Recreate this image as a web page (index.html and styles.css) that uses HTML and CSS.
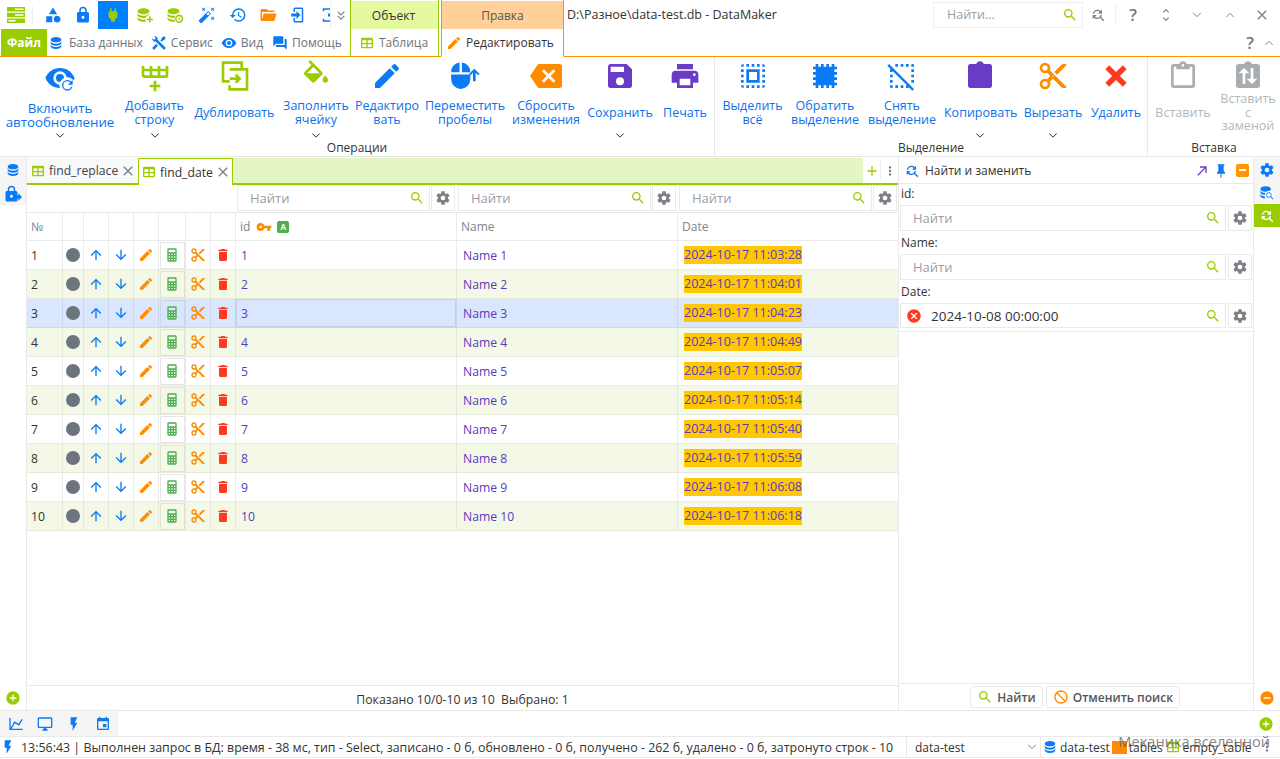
FILE: index.html
```html
<!DOCTYPE html>
<html lang="ru">
<head>
    <meta charset="UTF-8">
    <title>DataMaker</title>
    <link rel="stylesheet" href="styles.css">
</head>
<body>
<svg class="defs" xmlns="http://www.w3.org/2000/svg">
    <symbol id="eye" viewBox="0 0 24 24"><path d="M12,9A3,3 0 0,0 9,12A3,3 0 0,0 12,15A3,3 0 0,0 15,12A3,3 0 0,0 12,9M12,17A5,5 0 0,1 7,12A5,5 0 0,1 12,7A5,5 0 0,1 17,12A5,5 0 0,1 12,17M12,4.5C7,4.5 2.73,7.61 1,12C2.73,16.39 7,19.5 12,19.5C17,19.5 21.27,16.39 23,12C21.27,7.61 17,4.5 12,4.5Z"/></symbol>
    <symbol id="eyesync" viewBox="0 0 24 24"><path d="M12,9A3,3 0 0,0 9,12A3,3 0 0,0 12,15A3,3 0 0,0 15,12A3,3 0 0,0 12,9M12,17A5,5 0 0,1 7,12A5,5 0 0,1 12,7A5,5 0 0,1 17,12A5,5 0 0,1 12,17M12,4.5C7,4.5 2.73,7.61 1,12C2.73,16.39 7,19.5 12,19.5C17,19.5 21.27,16.39 23,12C21.27,7.61 17,4.5 12,4.5Z"/><circle cx="17.5" cy="17.5" r="6" fill="#fff"/><path transform="translate(11.5 11.5) scale(.5)" d="M17.65,6.35C16.2,4.9 14.21,4 12,4A8,8 0 0,0 4,12A8,8 0 0,0 12,20C15.73,20 18.84,17.45 19.73,14H17.65C16.83,16.33 14.61,18 12,18A6,6 0 0,1 6,12A6,6 0 0,1 12,6C13.66,6 15.14,6.69 16.22,7.78L13,11H20V4L17.65,6.35Z"/></symbol>
    <symbol id="pencil" viewBox="0 0 24 24"><path d="M20.71,7.04C21.1,6.65 21.1,6 20.71,5.63L18.37,3.29C18,2.9 17.35,2.9 16.96,3.29L15.12,5.12L18.87,8.87M3,17.25V21H6.75L17.81,9.93L14.06,6.18L3,17.25Z"/></symbol>
    <symbol id="save" viewBox="0 0 24 24"><path d="M15,9H5V5H15M12,19A3,3 0 0,1 9,16A3,3 0 0,1 12,13A3,3 0 0,1 15,16A3,3 0 0,1 12,19M17,3H5C3.89,3 3,3.9 3,5V19A2,2 0 0,0 5,21H19A2,2 0 0,0 21,19V7L17,3Z"/></symbol>
    <symbol id="printer" viewBox="0 0 24 24"><path d="M18,3H6V7H18M19,12A1,1 0 0,1 18,11A1,1 0 0,1 19,10A1,1 0 0,1 20,11A1,1 0 0,1 19,12M16,19H8V14H16M19,8H5A3,3 0 0,0 2,11V17H6V21H18V17H22V11A3,3 0 0,0 19,8Z"/></symbol>
    <symbol id="search" viewBox="0 0 24 24"><path d="M9.5,3A6.5,6.5 0 0,1 16,9.5C16,11.11 15.41,12.59 14.44,13.73L14.71,14H15.5L20.5,19L19,20.5L14,15.5V14.71L13.73,14.44C12.59,15.41 11.11,16 9.5,16A6.5,6.5 0 0,1 3,9.5A6.5,6.5 0 0,1 9.5,3M9.5,5C7,5 5,7 5,9.5C5,12 7,14 9.5,14C12,14 14,12 14,9.5C14,7 12,5 9.5,5Z"/></symbol>
    <symbol id="cog" viewBox="0 0 24 24"><path d="M12,15.5A3.5,3.5 0 0,1 8.5,12A3.5,3.5 0 0,1 12,8.5A3.5,3.5 0 0,1 15.5,12A3.5,3.5 0 0,1 12,15.5M19.43,12.97C19.47,12.65 19.5,12.33 19.5,12C19.5,11.67 19.47,11.34 19.43,11L21.54,9.37C21.73,9.22 21.78,8.95 21.66,8.73L19.66,5.27C19.54,5.05 19.27,4.96 19.05,5.05L16.56,6.05C16.04,5.66 15.5,5.32 14.87,5.07L14.5,2.42C14.46,2.18 14.25,2 14,2H10C9.75,2 9.54,2.18 9.5,2.42L9.13,5.07C8.5,5.32 7.96,5.66 7.44,6.05L4.95,5.05C4.73,4.96 4.46,5.05 4.34,5.27L2.34,8.73C2.21,8.95 2.27,9.22 2.46,9.37L4.57,11C4.53,11.34 4.5,11.67 4.5,12C4.5,12.33 4.53,12.65 4.57,12.97L2.46,14.63C2.27,14.78 2.21,15.05 2.34,15.27L4.34,18.73C4.46,18.95 4.73,19.03 4.95,18.95L7.44,17.94C7.96,18.34 8.5,18.68 9.13,18.93L9.5,21.58C9.54,21.82 9.75,22 10,22H14C14.25,22 14.46,21.82 14.5,21.58L14.87,18.93C15.5,18.67 16.04,18.34 16.56,17.94L19.05,18.95C19.27,19.03 19.54,18.95 19.66,18.73L21.66,15.27C21.78,15.05 21.73,14.78 21.54,14.63L19.43,12.97Z"/></symbol>
    <symbol id="cut" viewBox="0 0 24 24"><path d="M19,3L13,9L15,11L22,4V3M12,12.5A0.5,0.5 0 0,1 11.5,12A0.5,0.5 0 0,1 12,11.5A0.5,0.5 0 0,1 12.5,12A0.5,0.5 0 0,1 12,12.5M6,20A2,2 0 0,1 4,18C4,16.89 4.9,16 6,16A2,2 0 0,1 8,18C8,19.11 7.1,20 6,20M6,8A2,2 0 0,1 4,6C4,4.89 4.9,4 6,4A2,2 0 0,1 8,6C8,7.11 7.1,8 6,8M9.64,7.64C9.87,7.14 10,6.59 10,6A4,4 0 0,0 6,2A4,4 0 0,0 2,6A4,4 0 0,0 6,10C6.59,10 7.14,9.87 7.64,9.64L10,12L7.64,14.36C7.14,14.13 6.59,14 6,14A4,4 0 0,0 2,18A4,4 0 0,0 6,22A4,4 0 0,0 10,18C10,17.41 9.87,16.86 9.64,16.36L12,14L19,21H22V20L9.64,7.64Z"/></symbol>
    <symbol id="trash" viewBox="0 0 24 24"><path d="M19,4H15.5L14.5,3H9.5L8.5,4H5V6H19M6,19A2,2 0 0,0 8,21H16A2,2 0 0,0 18,19V7H6V19Z"/></symbol>
    <symbol id="close" viewBox="0 0 24 24"><path d="M20 6.91L17.09 4L12 9.09L6.91 4L4 6.91L9.09 12L4 17.09L6.91 20L12 14.91L17.09 20L20 17.09L14.91 12L20 6.91Z"/></symbol>
    <symbol id="up" viewBox="0 0 24 24"><path d="M13,20H11V8L5.5,13.5L4.08,12.08L12,4.16L19.92,12.08L18.5,13.5L13,8V20Z"/></symbol>
    <symbol id="down" viewBox="0 0 24 24"><path d="M11,4H13V16L18.5,10.5L19.92,11.92L12,19.84L4.08,11.92L5.5,10.5L11,16V4Z"/></symbol>
    <symbol id="calc" viewBox="0 0 24 24"><path d="M7,2H17A2,2 0 0,1 19,4V20A2,2 0 0,1 17,22H7A2,2 0 0,1 5,20V4A2,2 0 0,1 7,2M7,4V8H17V4H7M7,10V12H9V10H7M11,10V12H13V10H11M15,10V12H17V10H15M7,14V16H9V14H7M11,14V16H13V14H11M15,14V16H17V14H15M7,18V20H9V18H7M11,18V20H13V18H11M15,18V20H17V18H15Z"/></symbol>
    <symbol id="db" viewBox="0 0 24 24"><path d="M12,3C7.58,3 4,4.79 4,7C4,9.21 7.58,11 12,11C16.42,11 20,9.21 20,7C20,4.79 16.42,3 12,3M4,9V12C4,14.21 7.58,16 12,16C16.42,16 20,14.21 20,12V9C20,11.21 16.42,13 12,13C7.58,13 4,11.21 4,9M4,14V17C4,19.21 7.58,21 12,21C16.42,21 20,19.21 20,17V14C20,16.21 16.42,18 12,18C7.58,18 4,16.21 4,14Z"/></symbol>
    <symbol id="dbplus" viewBox="0 0 24 24"><path transform="translate(-2 0)" d="M12,3C7.58,3 4,4.79 4,7C4,9.21 7.58,11 12,11C16.42,11 20,9.21 20,7C20,4.79 16.42,3 12,3M4,9V12C4,14.21 7.58,16 12,16C16.42,16 20,14.21 20,12V9C20,11.21 16.42,13 12,13C7.58,13 4,11.21 4,9M4,14V17C4,19.21 7.58,21 12,21C16.42,21 20,19.21 20,17V14C20,16.21 16.42,18 12,18C7.58,18 4,16.21 4,14Z"/><circle cx="18.5" cy="18" r="6" fill="#fff"/><path d="M17.5 14h2v3h3v2h-3v3h-2v-3h-3v-2h3z"/></symbol>
    <symbol id="dbclock" viewBox="0 0 24 24"><path transform="translate(-2 0)" d="M12,3C7.58,3 4,4.79 4,7C4,9.21 7.58,11 12,11C16.42,11 20,9.21 20,7C20,4.79 16.42,3 12,3M4,9V12C4,14.21 7.58,16 12,16C16.42,16 20,14.21 20,12V9C20,11.21 16.42,13 12,13C7.58,13 4,11.21 4,9M4,14V17C4,19.21 7.58,21 12,21C16.42,21 20,19.21 20,17V14C20,16.21 16.42,18 12,18C7.58,18 4,16.21 4,14Z"/><circle cx="17.5" cy="17" r="6.5" fill="#fff"/><path d="M17.5 11.5a5.5 5.5 0 1 0 0 11a5.5 5.5 0 0 0 0-11zm0 2a3.5 3.5 0 1 1 0 7a3.5 3.5 0 0 1 0-7zm-.7 1v3l2.4 1.4.6-1-1.7-1v-2.4z"/></symbol>
    <symbol id="dbsearch" viewBox="0 0 24 24"><path transform="translate(-2 -1)" d="M12,3C7.58,3 4,4.79 4,7C4,9.21 7.58,11 12,11C16.42,11 20,9.21 20,7C20,4.79 16.42,3 12,3M4,9V12C4,14.21 7.58,16 12,16C16.42,16 20,14.21 20,12V9C20,11.21 16.42,13 12,13C7.58,13 4,11.21 4,9M4,14V17C4,19.21 7.58,21 12,21C16.42,21 20,19.21 20,17V14C20,16.21 16.42,18 12,18C7.58,18 4,16.21 4,14Z"/><circle cx="16" cy="16" r="7.5" fill="#fff"/><path transform="translate(9 9) scale(.62)" d="M9.5,3A6.5,6.5 0 0,1 16,9.5C16,11.11 15.41,12.59 14.44,13.73L14.71,14H15.5L20.5,19L19,20.5L14,15.5V14.71L13.73,14.44C12.59,15.41 11.11,16 9.5,16A6.5,6.5 0 0,1 3,9.5A6.5,6.5 0 0,1 9.5,3M9.5,5C7,5 5,7 5,9.5C5,12 7,14 9.5,14C12,14 14,12 14,9.5C14,7 12,5 9.5,5Z"/></symbol>
    <symbol id="table" viewBox="0 0 24 24"><path d="M5,4H19A2,2 0 0,1 21,6V18A2,2 0 0,1 19,20H5A2,2 0 0,1 3,18V6A2,2 0 0,1 5,4M5,8V12H11V8H5M13,8V12H19V8H13M5,14V18H11V14H5M13,14V18H19V14H13Z"/></symbol>
    <symbol id="lock" viewBox="0 0 24 24"><path d="M12,17A2,2 0 0,0 14,15C14,13.89 13.1,13 12,13A2,2 0 0,0 10,15A2,2 0 0,0 12,17M18,8A2,2 0 0,1 20,10V20A2,2 0 0,1 18,22H6A2,2 0 0,1 4,20V10C4,8.89 4.9,8 6,8H7V6A5,5 0 0,1 12,1A5,5 0 0,1 17,6V8H18M12,3A3,3 0 0,0 9,6V8H15V6A3,3 0 0,0 12,3Z"/></symbol>
    <symbol id="locksync" viewBox="0 0 24 24"><path transform="translate(-2 0)" d="M12,17A2,2 0 0,0 14,15C14,13.89 13.1,13 12,13A2,2 0 0,0 10,15A2,2 0 0,0 12,17M18,8A2,2 0 0,1 20,10V20A2,2 0 0,1 18,22H6A2,2 0 0,1 4,20V10C4,8.89 4.9,8 6,8H7V6A5,5 0 0,1 12,1A5,5 0 0,1 17,6V8H18M12,3A3,3 0 0,0 9,6V8H15V6A3,3 0 0,0 12,3Z"/><path d="M16 14h3v-3l5 5-5 5v-3h-3z"/></symbol>
    <symbol id="plug" viewBox="0 0 24 24"><path d="M16,7V3H14V7H10V3H8V7H8C7,7 6,8 6,9V14.5L9.5,18V21H14.5V18L18,14.5V9C18,8 17,7 16,7Z"/></symbol>
    <symbol id="shape" viewBox="0 0 24 24"><path d="M11,13.5V21.5H3V13.5H11M12,2L17.5,11H6.5L12,2M17.5,13C20,13 22,15 22,17.5C22,20 20,22 17.5,22C15,22 13,20 13,17.5C13,15 15,13 17.5,13Z"/></symbol>
    <symbol id="folder" viewBox="0 0 24 24"><path d="M19,20H4C2.89,20 2,19.1 2,18V6C2,4.89 2.89,4 4,4H10L12,6H19A2,2 0 0,1 21,8H21L4,8V18L6.14,10H23.21L20.93,18.5C20.7,19.37 19.92,20 19,20Z"/></symbol>
    <symbol id="tools" viewBox="0 0 24 24"><path d="M21.71 20.29L20.29 21.71A1 1 0 0 1 18.88 21.71L7 9.85A3.81 3.81 0 0 1 6 10A4 4 0 0 1 2.22 4.7L4.76 7.24L5.29 6.71L6.71 5.29L7.24 4.76L4.7 2.22A4 4 0 0 1 10 6A3.81 3.81 0 0 1 9.85 7L21.71 18.88A1 1 0 0 1 21.71 20.29M2.29 18.88A1 1 0 0 0 2.29 20.29L3.71 21.71A1 1 0 0 0 5.12 21.71L10.59 16.25L7.76 13.42M20 2L16 4V6L13.83 8.17L15.83 10.17L18 8H20L22 4Z"/></symbol>
    <symbol id="forum" viewBox="0 0 24 24"><path d="M17,12V3A1,1 0 0,0 16,2H3A1,1 0 0,0 2,3V17L6,13H16A1,1 0 0,0 17,12M21,6H19V15H6V17A1,1 0 0,0 7,18H18L22,22V7A1,1 0 0,0 21,6Z"/></symbol>
    <symbol id="pin" viewBox="0 0 24 24"><path d="M16,12V4H17V2H7V4H8V12L6,14V16H11.2V22H12.8V16H18V14L16,12Z"/></symbol>
    <symbol id="diag" viewBox="0 0 24 24"><path d="M5,17.59L15.59,7H9V5H19V15H17V8.41L6.41,19L5,17.59Z"/></symbol>
    <symbol id="key" viewBox="0 0 24 24"><path d="M7,14A2,2 0 0,1 5,12A2,2 0 0,1 7,10A2,2 0 0,1 9,12A2,2 0 0,1 7,14M12.65,10C11.83,7.67 9.61,6 7,6A6,6 0 0,0 1,12A6,6 0 0,0 7,18C9.61,18 11.83,16.33 12.65,14H17V18H21V14H23V10H12.65Z"/></symbol>
    <symbol id="clip" viewBox="0 0 24 24"><path d="M19,3H14.82C14.4,1.84 13.3,1 12,1C10.7,1 9.6,1.84 9.18,3H5A2,2 0 0,0 3,5V19A2,2 0 0,0 5,21H19A2,2 0 0,0 21,19V5A2,2 0 0,0 19,3Z"/></symbol>
    <symbol id="clipout" viewBox="0 0 24 24"><path d="M19,3H14.82C14.4,1.84 13.3,1 12,1C10.7,1 9.6,1.84 9.18,3H5A2,2 0 0,0 3,5V19A2,2 0 0,0 5,21H19A2,2 0 0,0 21,19V5A2,2 0 0,0 19,3M12,3A1,1 0 0,1 13,4A1,1 0 0,1 12,5A1,1 0 0,1 11,4A1,1 0 0,1 12,3M7,7H17V5H19V19H5V5H7V7Z"/></symbol>
    <symbol id="clipswap" viewBox="0 0 24 24"><path d="M19,3H14.82C14.4,1.84 13.3,1 12,1C10.7,1 9.6,1.84 9.18,3H5A2,2 0 0,0 3,5V19A2,2 0 0,0 5,21H19A2,2 0 0,0 21,19V5A2,2 0 0,0 19,3Z"/><path fill="#fff" d="M9 6l4 4h-3v8H8v-8H5zM15 18l-4-4h3V6h2v8h3z"/></symbol>
    <symbol id="backspace" viewBox="0 0 24 24"><path d="M22,3H7C6.31,3 5.77,3.35 5.41,3.88L0,12L5.41,20.11C5.77,20.64 6.31,21 7,21H22A2,2 0 0,0 24,19V5A2,2 0 0,0 22,3M19,15.59L17.59,17L14,13.41L10.41,17L9,15.59L12.59,12L9,8.41L10.41,7L14,10.59L17.59,7L19,8.41L15.41,12L19,15.59Z"/></symbol>
    <symbol id="selall" viewBox="0 0 24 24"><path d="M9,9H15V15H9M7,17H17V7H7M15,5H17V3H15M15,21H17V19H15M19,17H21V15H19M19,9H21V7H19M19,21A2,2 0 0,0 21,19H19M19,13H21V11H19M11,21H13V19H11M9,3H7V5H9M3,17H5V15H3M5,21V19H3A2,2 0 0,0 5,21M19,3V5H21A2,2 0 0,0 19,3M13,3H11V5H13M3,9H5V7H3M7,21H9V19H7M3,13H5V11H3M3,5H5V3A2,2 0 0,0 3,5Z"/></symbol>
    <symbol id="selinv" viewBox="0 0 24 24"><path d="M5,3H7V5H9V3H11V5H13V3H15V5H17V3H19V5H21V7H19V9H21V11H19V13H21V15H19V17H21V19H19V21H17V19H15V21H13V19H11V21H9V19H7V21H5V19H3V17H5V15H3V13H5V11H3V9H5V7H3V5H5V3Z"/></symbol>
    <symbol id="seloff" viewBox="0 0 24 24"><path d="M1,4.27L2.28,3L21,21.72L19.73,23L17,20.27V21H15V19H15.73L5,8.27V9H3V7H3.73L1,4.27M20,3A1,1 0 0,1 21,4V5H19V3H20M15,5V3H17V5H15M11,5V3H13V5H11M7,5V3H9V5H7M11,21V19H13V21H11M7,21V19H9V21H7M4,21A1,1 0 0,1 3,20V19H5V21H4M3,15H5V17H3V15M21,15V17H19V15H21M3,11H5V13H3V11M21,11V13H19V11H21M21,7V9H19V7H21Z"/></symbol>
    <symbol id="fill" viewBox="0 0 24 24"><path d="M19,11.5C19,11.5 17,13.67 17,15A2,2 0 0,0 19,17A2,2 0 0,0 21,15C21,13.67 19,11.5 19,11.5M5.21,10L10,5.21L14.79,10M16.56,8.94L7.62,0L6.21,1.41L8.59,3.79L3.44,8.94C2.85,9.5 2.85,10.47 3.44,11.06L8.94,16.56C9.23,16.85 9.62,17 10,17C10.38,17 10.77,16.85 11.06,16.56L16.56,11.06C17.15,10.47 17.15,9.5 16.56,8.94Z"/></symbol>
    <symbol id="addrow" viewBox="0 0 24 24"><path d="M22,10A2,2 0 0,1 20,12H4A2,2 0 0,1 2,10V3H4V5H8V3H10V5H14V3H16V5H20V3H22V10M4,10H8V7H4V10M10,10H14V7H10V10M20,10V7H16V10H20M11,14H13V17H16V19H13V22H11V19H8V17H11V14Z"/></symbol>
    <symbol id="dup" viewBox="0 0 24 24"><path fill="none" stroke="currentColor" stroke-width="2" d="M8 16H3V2h14v5M8 7h13v15H8v-3M8 14h7M12.5 11l3 3-3 3"/></symbol>
    <symbol id="mouseup" viewBox="0 0 24 24"><path transform="translate(-2 1) scale(.9)" d="M11,1.07C7.05,1.56 4,4.92 4,9H11M4,15A8,8 0 0,0 12,23A8,8 0 0,0 20,15V11H4M13,1.07V9H20C20,4.92 16.94,1.56 13,1.07Z"/><path d="M20 16h-2V9.5l-2 2-1-1 4-4 4 4-1 1-2-2z"/></symbol>
    <symbol id="wand" viewBox="0 0 24 24"><path d="M7.5,5.6L5,7L6.4,4.5L5,2L7.5,3.4L10,2L8.6,4.5L10,7L7.5,5.6M19.5,15.4L22,14L20.6,16.5L22,19L19.5,17.6L17,19L18.4,16.5L17,14L19.5,15.4M22,2L20.6,4.5L22,7L19.5,5.6L17,7L18.4,4.5L17,2L19.5,3.4L22,2M13.34,12.78L15.78,10.34L13.66,8.22L11.22,10.66L13.34,12.78M14.37,7.29L16.71,9.63C17.1,10 17.1,10.65 16.71,11.04L5.04,22.71C4.65,23.1 4,23.1 3.63,22.71L1.29,20.37C0.9,20 0.9,19.35 1.29,18.96L12.96,7.29C13.35,6.9 14,6.9 14.37,7.29Z"/></symbol>
    <symbol id="history" viewBox="0 0 24 24"><path d="M13.5,8H12V13L16.28,15.54L17,14.33L13.5,12.25V8M13,3A9,9 0 0,0 4,12H1L4.96,16.03L9,12H6A7,7 0 0,1 13,5A7,7 0 0,1 20,12A7,7 0 0,1 13,19C11.07,19 9.32,18.21 8.06,16.94L6.64,18.36C8.27,20 10.5,21 13,21A9,9 0 0,0 22,12A9,9 0 0,0 13,3"/></symbol>
    <symbol id="login" viewBox="0 0 24 24"><path d="M10,17.25V14H3V10H10V6.75L15.25,12L10,17.25M8,2H17A2,2 0 0,1 19,4V20A2,2 0 0,1 17,22H8A2,2 0 0,1 6,20V16H8V20H17V4H8V8H6V4A2,2 0 0,1 8,2Z"/></symbol>
    <symbol id="boxdot" viewBox="0 0 24 24"><path d="M5 3h16v18H5v-4h2v2h12V5H7v2H5zM12 10h4v4h-4z"/></symbol>
    <symbol id="chart" viewBox="0 0 24 24"><path d="M16,11.78L20.24,4.45L21.97,5.45L16.74,14.5L10.23,10.75L5.46,19H22V21H2V3H4V17.54L9.5,8L16,11.78Z"/></symbol>
    <symbol id="monitor" viewBox="0 0 24 24"><path d="M21,16H3V4H21M21,2H3C1.89,2 1,2.89 1,4V16A2,2 0 0,0 3,18H10V20H8V22H16V20H14V18H21A2,2 0 0,0 23,16V4C23,2.89 22.1,2 21,2Z"/></symbol>
    <symbol id="flash" viewBox="0 0 24 24"><path d="M7,2V13H10V22L17,10H13L17,2H7Z"/></symbol>
    <symbol id="calendar" viewBox="0 0 24 24"><path d="M19,19H5V8H19M16,1V3H8V1H6V3H5C3.89,3 3,3.89 3,5V19A2,2 0 0,0 5,21H19A2,2 0 0,0 21,19V5C21,3.89 20.1,3 19,3H18V1M17,12H12V17H17V12Z"/></symbol>
    <symbol id="findrep" viewBox="0 0 24 24"><path d="M11,6C12.38,6 13.63,6.56 14.54,7.46L12,10H18V4L15.95,6.05C14.68,4.78 12.93,4 11,4C7.47,4 4.57,6.61 4.08,10H6.1C6.56,7.72 8.58,6 11,6M16.64,15.14C17.3,14.24 17.76,13.17 17.92,12H15.9C15.44,14.28 13.42,16 11,16C9.62,16 8.37,15.44 7.46,14.54L10,12H4V18L6.05,15.95C7.32,17.22 9.07,18 11,18C12.55,18 14,17.5 15.14,16.64L20,21.5L21.5,20L16.64,15.14Z"/></symbol>
    <symbol id="pluscirc" viewBox="0 0 24 24"><path d="M17,13H13V17H11V13H7V11H11V7H13V11H17M12,2A10,10 0 0,0 2,12A10,10 0 0,0 12,22A10,10 0 0,0 22,12A10,10 0 0,0 12,2Z"/></symbol>
    <symbol id="minuscirc" viewBox="0 0 24 24"><path d="M17,13H7V11H17M12,2A10,10 0 0,0 2,12A10,10 0 0,0 12,22A10,10 0 0,0 22,12A10,10 0 0,0 12,2Z"/></symbol>
    <symbol id="closecirc" viewBox="0 0 24 24"><path d="M12,2C17.53,2 22,6.47 22,12C22,17.53 17.53,22 12,22C6.47,22 2,17.53 2,12C2,6.47 6.47,2 12,2M15.59,7L12,10.59L8.41,7L7,8.41L10.59,12L7,15.59L8.41,17L12,13.41L15.59,17L17,15.59L13.41,12L17,8.41L15.59,7Z"/></symbol>
    <symbol id="cancel" viewBox="0 0 24 24"><path d="M12 2C17.5 2 22 6.5 22 12S17.5 22 12 22 2 17.5 2 12 6.5 2 12 2M12 4C10.1 4 8.4 4.6 7.1 5.7L18.3 16.9C19.3 15.5 20 13.8 20 12C20 7.6 16.4 4 12 4M16.9 18.3L5.7 7.1C4.6 8.4 4 10.1 4 12C4 16.4 7.6 20 12 20C13.9 20 15.6 19.4 16.9 18.3Z"/></symbol>
    <symbol id="dots" viewBox="0 0 24 24"><path d="M12,16A2,2 0 0,1 14,18A2,2 0 0,1 12,20A2,2 0 0,1 10,18A2,2 0 0,1 12,16M12,10A2,2 0 0,1 14,12A2,2 0 0,1 12,14A2,2 0 0,1 10,12A2,2 0 0,1 12,10M12,4A2,2 0 0,1 14,6A2,2 0 0,1 12,8A2,2 0 0,1 10,6A2,2 0 0,1 12,4Z"/></symbol>
    <symbol id="plus" viewBox="0 0 24 24"><path d="M19,13H13V19H11V13H5V11H11V5H13V11H19V13Z"/></symbol>
    <symbol id="x" viewBox="0 0 24 24"><path d="M19,6.41L17.59,5L12,10.59L6.41,5L5,6.41L10.59,12L5,17.59L6.41,19L12,13.41L17.59,19L19,17.59L13.41,12L19,6.41Z"/></symbol>
    <symbol id="chev" viewBox="0 0 12 8"><path fill="none" stroke="currentColor" stroke-width="1.2" d="M1.5 1.5L6 6l4.5-4.5"/></symbol>
    <symbol id="chevup" viewBox="0 0 12 8"><path fill="none" stroke="currentColor" stroke-width="1.2" d="M1.5 6.5L6 2l4.5 4.5"/></symbol>
    <symbol id="chev2" viewBox="0 0 12 12"><path fill="none" stroke="currentColor" stroke-width="1.4" d="M2 2l4 4 4-4M2 7l4 4 4-4"/></symbol>
    <symbol id="unfold" viewBox="0 0 12 18"><path fill="none" stroke="currentColor" stroke-width="1.3" d="M3 6l3-3 3 3M3 12l3 3 3-3"/></symbol>
    <symbol id="app" viewBox="0 0 18 16"><path d="M0 0h18v4.5H0zM0 5.7h18v4.5H0zM0 11.5h18V16H0z"/><path fill="#fff" d="M8 1.5h8.5V3H8zM8 7.2h8.5v1.5H8zM1.5 13h7v1.5h-7z"/></symbol>
</svg>

<div class="window">
    <header class="top">
        <div class="top-left">
            <div class="quick">
                <span class="q-app"><svg class="i18 g"><use href="#app"/></svg></span>
                <span class="q-btn"><svg class="i18 b"><use href="#shape"/></svg></span>
                <span class="q-btn"><svg class="i18 b"><use href="#lock"/></svg></span>
                <span class="q-btn q-on"><svg class="i18 g"><use href="#plug"/></svg></span>
                <span class="q-btn"><svg class="i18 g"><use href="#dbplus"/></svg></span>
                <span class="q-btn"><svg class="i18 g"><use href="#dbclock"/></svg></span>
                <span class="q-btn q-wand"><svg class="i18 b"><use href="#wand"/></svg></span>
                <span class="q-btn q-hist"><svg class="i18 b"><use href="#history"/></svg></span>
                <span class="q-btn"><svg class="i18 o"><use href="#folder"/></svg></span>
                <span class="q-btn"><svg class="i18 b"><use href="#login"/></svg></span>
                <span class="q-btn q-cut"><svg class="i18 b"><use href="#boxdot"/></svg></span>
                <span class="q-more"><svg class="i10 gr"><use href="#chev2"/></svg></span>
            </div>
            <nav class="menu">
                <span class="m-file">Файл</span>
                <span class="m-item m-db"><svg class="i16 b"><use href="#db"/></svg>База данных</span>
                <span class="m-item"><svg class="i16 b"><use href="#tools"/></svg>Сервис</span>
                <span class="m-item"><svg class="i16 b"><use href="#eye"/></svg>Вид</span>
                <span class="m-item m-help"><svg class="i16 b"><use href="#forum"/></svg>Помощь</span>
            </nav>
        </div>
        <div class="ctx ctx-obj">
            <div class="ctx-head">Объект</div>
            <div class="ctx-tab"><svg class="i16 g"><use href="#table"/></svg>Таблица</div>
        </div>
        <div class="ctx ctx-edit">
            <div class="ctx-head">Правка</div>
            <div class="ctx-tab"><svg class="i16 o"><use href="#pencil"/></svg>Редактировать</div>
        </div>
        <div class="top-right">
            <div class="title-row">
                <span class="title">D:\Разное\data-test.db - DataMaker</span>
                <div class="top-search"><span>Найти...</span><svg class="i16 g"><use href="#search"/></svg></div>
                <span class="t-btn t-sync"><svg class="i16 gr"><use href="#findrep"/></svg></span>
                <span class="t-btn t-help">?</span>
                <span class="t-btn t-a"><svg class="i12 gr"><use href="#unfold"/></svg></span>
                <span class="t-btn t-b"><svg class="i10 gr"><use href="#chev"/></svg></span>
                <span class="t-btn t-c"><svg class="i10 gr"><use href="#chevup"/></svg></span>
                <span class="t-btn t-d"><svg class="i16 gr"><use href="#x"/></svg></span>
            </div>
            <div class="help-row">
                <span class="t-help">?</span>
                <svg class="i10 gr"><use href="#chevup"/></svg>
            </div>
        </div>
    </header>

    <section class="ribbon">
        <div class="group g-ops">
            <div class="items">
                <div class="rb"><svg class="ri b ri-low"><use href="#eyesync"/></svg><div class="lb lb-low">Включить автообновление</div><svg class="cv"><use href="#chev"/></svg></div>
                <div class="rb"><svg class="ri g ri-low"><use href="#addrow"/></svg><div class="lb">Добавить строку</div><svg class="cv"><use href="#chev"/></svg></div>
                <div class="rb"><svg class="ri g"><use href="#dup"/></svg><div class="lb">Дублировать</div></div>
                <div class="rb"><svg class="ri g"><use href="#fill"/></svg><div class="lb">Заполнить ячейку</div><svg class="cv"><use href="#chev"/></svg></div>
                <div class="rb"><svg class="ri b"><use href="#pencil"/></svg><div class="lb"><span>Редактиро<br>вать</span></div></div>
                <div class="rb"><svg class="ri b"><use href="#mouseup"/></svg><div class="lb">Переместить пробелы</div></div>
                <div class="rb"><svg class="ri o"><use href="#backspace"/></svg><div class="lb">Сбросить изменения</div></div>
                <div class="rb"><svg class="ri p"><use href="#save"/></svg><div class="lb">Сохранить</div><svg class="cv"><use href="#chev"/></svg></div>
                <div class="rb"><svg class="ri p"><use href="#printer"/></svg><div class="lb">Печать</div></div>
            </div>
            <div class="g-title">Операции</div>
        </div>
        <div class="group g-sel">
            <div class="items">
                <div class="rb"><svg class="ri b"><use href="#selall"/></svg><div class="lb">Выделить всё</div></div>
                <div class="rb"><svg class="ri b"><use href="#selinv"/></svg><div class="lb">Обратить выделение</div></div>
                <div class="rb"><svg class="ri b"><use href="#seloff"/></svg><div class="lb">Снять выделение</div></div>
                <div class="rb"><svg class="ri p"><use href="#clip"/></svg><div class="lb">Копировать</div><svg class="cv"><use href="#chev"/></svg></div>
                <div class="rb"><svg class="ri o"><use href="#cut"/></svg><div class="lb">Вырезать</div><svg class="cv"><use href="#chev"/></svg></div>
                <div class="rb"><svg class="ri r"><use href="#close"/></svg><div class="lb">Удалить</div></div>
            </div>
            <div class="g-title">Выделение</div>
        </div>
        <div class="group g-paste">
            <div class="items">
                <div class="rb off"><svg class="ri gr2"><use href="#clipout"/></svg><div class="lb">Вставить</div></div>
                <div class="rb off"><svg class="ri gr2"><use href="#clipswap"/></svg><div class="lb">Вставить с заменой</div></div>
            </div>
            <div class="g-title">Вставка</div>
        </div>
    </section>

    <main class="work">
        <aside class="side side-l">
            <div class="side-top">
                <span class="s-btn"><svg class="i16 b"><use href="#db"/></svg></span>
                <span class="s-btn"><svg class="i18 b"><use href="#locksync"/></svg></span>
            </div>
            <span class="s-foot"><svg class="i16 g"><use href="#pluscirc"/></svg></span>
        </aside>

        <div class="center">
            <div class="tabs">
                <div class="tab"><svg class="i16 g"><use href="#table"/></svg>find_replace<svg class="i16 gr"><use href="#x"/></svg></div>
                <div class="tab tab-on"><svg class="i16 g"><use href="#table"/></svg>find_date<svg class="i16 gr"><use href="#x"/></svg></div>
                <div class="tabs-rest"></div>
                <span class="tab-btn"><svg class="i16 g"><use href="#plus"/></svg></span>
                <span class="tab-btn tab-dots"><svg class="i14 gr3"><use href="#dots"/></svg></span>
            </div>

            <div class="filters">
                <div class="f-col"><div class="inp"><span class="ph">Найти</span><svg class="i16 g"><use href="#search"/></svg></div><span class="gear"><svg class="i16 gr"><use href="#cog"/></svg></span></div>
                <div class="f-col"><div class="inp"><span class="ph">Найти</span><svg class="i16 g"><use href="#search"/></svg></div><span class="gear"><svg class="i16 gr"><use href="#cog"/></svg></span></div>
                <div class="f-col"><div class="inp"><span class="ph">Найти</span><svg class="i16 g"><use href="#search"/></svg></div><span class="gear"><svg class="i16 gr"><use href="#cog"/></svg></span></div>
            </div>

            <div class="grid">
                <div class="row head">
                    <span class="c">№</span><span class="c"></span><span class="c"></span><span class="c"></span><span class="c"></span><span class="c"></span><span class="c"></span><span class="c"></span>
                    <span class="c c-id">id<svg class="i16 o key"><use href="#key"/></svg><b class="badge">A</b></span><span class="c c-name">Name</span><span class="c c-date">Date</span>
                </div>
                <div class="row">
                    <span class="c c-n">1</span><span class="c ic"><i class="dot"></i></span><span class="c ic"><svg class="i16 b"><use href="#up"/></svg></span><span class="c ic"><svg class="i16 b"><use href="#down"/></svg></span><span class="c ic"><svg class="i16 o"><use href="#pencil"/></svg></span><span class="c ic c-calc"><span class="calc"><svg class="i16 cg"><use href="#calc"/></svg></span></span><span class="c ic"><svg class="i16 o"><use href="#cut"/></svg></span><span class="c ic"><svg class="i16 r"><use href="#trash"/></svg></span>
                    <span class="c c-id v">1</span><span class="c c-name v">Name 1</span><span class="c c-date"><mark>2024-10-17 11:03:28</mark></span>
                </div>
                <div class="row alt">
                    <span class="c c-n">2</span><span class="c ic"><i class="dot"></i></span><span class="c ic"><svg class="i16 b"><use href="#up"/></svg></span><span class="c ic"><svg class="i16 b"><use href="#down"/></svg></span><span class="c ic"><svg class="i16 o"><use href="#pencil"/></svg></span><span class="c ic c-calc"><span class="calc"><svg class="i16 cg"><use href="#calc"/></svg></span></span><span class="c ic"><svg class="i16 o"><use href="#cut"/></svg></span><span class="c ic"><svg class="i16 r"><use href="#trash"/></svg></span>
                    <span class="c c-id v">2</span><span class="c c-name v">Name 2</span><span class="c c-date"><mark>2024-10-17 11:04:01</mark></span>
                </div>
                <div class="row sel">
                    <span class="c c-n">3</span><span class="c ic"><i class="dot"></i></span><span class="c ic"><svg class="i16 b"><use href="#up"/></svg></span><span class="c ic"><svg class="i16 b"><use href="#down"/></svg></span><span class="c ic"><svg class="i16 o"><use href="#pencil"/></svg></span><span class="c ic c-calc"><span class="calc"><svg class="i16 cg"><use href="#calc"/></svg></span></span><span class="c ic"><svg class="i16 o"><use href="#cut"/></svg></span><span class="c ic"><svg class="i16 r"><use href="#trash"/></svg></span>
                    <span class="c c-id v c-cur">3</span><span class="c c-name v">Name 3</span><span class="c c-date"><mark>2024-10-17 11:04:23</mark></span>
                </div>
                <div class="row alt">
                    <span class="c c-n">4</span><span class="c ic"><i class="dot"></i></span><span class="c ic"><svg class="i16 b"><use href="#up"/></svg></span><span class="c ic"><svg class="i16 b"><use href="#down"/></svg></span><span class="c ic"><svg class="i16 o"><use href="#pencil"/></svg></span><span class="c ic c-calc"><span class="calc"><svg class="i16 cg"><use href="#calc"/></svg></span></span><span class="c ic"><svg class="i16 o"><use href="#cut"/></svg></span><span class="c ic"><svg class="i16 r"><use href="#trash"/></svg></span>
                    <span class="c c-id v">4</span><span class="c c-name v">Name 4</span><span class="c c-date"><mark>2024-10-17 11:04:49</mark></span>
                </div>
                <div class="row">
                    <span class="c c-n">5</span><span class="c ic"><i class="dot"></i></span><span class="c ic"><svg class="i16 b"><use href="#up"/></svg></span><span class="c ic"><svg class="i16 b"><use href="#down"/></svg></span><span class="c ic"><svg class="i16 o"><use href="#pencil"/></svg></span><span class="c ic c-calc"><span class="calc"><svg class="i16 cg"><use href="#calc"/></svg></span></span><span class="c ic"><svg class="i16 o"><use href="#cut"/></svg></span><span class="c ic"><svg class="i16 r"><use href="#trash"/></svg></span>
                    <span class="c c-id v">5</span><span class="c c-name v">Name 5</span><span class="c c-date"><mark>2024-10-17 11:05:07</mark></span>
                </div>
                <div class="row alt">
                    <span class="c c-n">6</span><span class="c ic"><i class="dot"></i></span><span class="c ic"><svg class="i16 b"><use href="#up"/></svg></span><span class="c ic"><svg class="i16 b"><use href="#down"/></svg></span><span class="c ic"><svg class="i16 o"><use href="#pencil"/></svg></span><span class="c ic c-calc"><span class="calc"><svg class="i16 cg"><use href="#calc"/></svg></span></span><span class="c ic"><svg class="i16 o"><use href="#cut"/></svg></span><span class="c ic"><svg class="i16 r"><use href="#trash"/></svg></span>
                    <span class="c c-id v">6</span><span class="c c-name v">Name 6</span><span class="c c-date"><mark>2024-10-17 11:05:14</mark></span>
                </div>
                <div class="row">
                    <span class="c c-n">7</span><span class="c ic"><i class="dot"></i></span><span class="c ic"><svg class="i16 b"><use href="#up"/></svg></span><span class="c ic"><svg class="i16 b"><use href="#down"/></svg></span><span class="c ic"><svg class="i16 o"><use href="#pencil"/></svg></span><span class="c ic c-calc"><span class="calc"><svg class="i16 cg"><use href="#calc"/></svg></span></span><span class="c ic"><svg class="i16 o"><use href="#cut"/></svg></span><span class="c ic"><svg class="i16 r"><use href="#trash"/></svg></span>
                    <span class="c c-id v">7</span><span class="c c-name v">Name 7</span><span class="c c-date"><mark>2024-10-17 11:05:40</mark></span>
                </div>
                <div class="row alt">
                    <span class="c c-n">8</span><span class="c ic"><i class="dot"></i></span><span class="c ic"><svg class="i16 b"><use href="#up"/></svg></span><span class="c ic"><svg class="i16 b"><use href="#down"/></svg></span><span class="c ic"><svg class="i16 o"><use href="#pencil"/></svg></span><span class="c ic c-calc"><span class="calc"><svg class="i16 cg"><use href="#calc"/></svg></span></span><span class="c ic"><svg class="i16 o"><use href="#cut"/></svg></span><span class="c ic"><svg class="i16 r"><use href="#trash"/></svg></span>
                    <span class="c c-id v">8</span><span class="c c-name v">Name 8</span><span class="c c-date"><mark>2024-10-17 11:05:59</mark></span>
                </div>
                <div class="row">
                    <span class="c c-n">9</span><span class="c ic"><i class="dot"></i></span><span class="c ic"><svg class="i16 b"><use href="#up"/></svg></span><span class="c ic"><svg class="i16 b"><use href="#down"/></svg></span><span class="c ic"><svg class="i16 o"><use href="#pencil"/></svg></span><span class="c ic c-calc"><span class="calc"><svg class="i16 cg"><use href="#calc"/></svg></span></span><span class="c ic"><svg class="i16 o"><use href="#cut"/></svg></span><span class="c ic"><svg class="i16 r"><use href="#trash"/></svg></span>
                    <span class="c c-id v">9</span><span class="c c-name v">Name 9</span><span class="c c-date"><mark>2024-10-17 11:06:08</mark></span>
                </div>
                <div class="row alt">
                    <span class="c c-n">10</span><span class="c ic"><i class="dot"></i></span><span class="c ic"><svg class="i16 b"><use href="#up"/></svg></span><span class="c ic"><svg class="i16 b"><use href="#down"/></svg></span><span class="c ic"><svg class="i16 o"><use href="#pencil"/></svg></span><span class="c ic c-calc"><span class="calc"><svg class="i16 cg"><use href="#calc"/></svg></span></span><span class="c ic"><svg class="i16 o"><use href="#cut"/></svg></span><span class="c ic"><svg class="i16 r"><use href="#trash"/></svg></span>
                    <span class="c c-id v">10</span><span class="c c-name v">Name 10</span><span class="c c-date"><mark>2024-10-17 11:06:18</mark></span>
                </div>
            </div>

            <div class="grid-foot">Показано 10/0-10 из 10&nbsp; Выбрано: 1</div>
        </div>

        <aside class="panel">
            <div class="p-head">
                <svg class="i16 b"><use href="#findrep"/></svg>
                <span class="p-title">Найти и заменить</span>
                <svg class="i16 p"><use href="#diag"/></svg>
                <svg class="i16 b"><use href="#pin"/></svg>
                <span class="p-min"></span>
            </div>
            <div class="p-body">
                <div class="p-label">id:</div>
                <div class="p-field"><div class="inp"><span class="ph">Найти</span><svg class="i16 g"><use href="#search"/></svg></div><span class="gear"><svg class="i16 gr"><use href="#cog"/></svg></span></div>
                <div class="p-label">Name:</div>
                <div class="p-field"><div class="inp"><span class="ph">Найти</span><svg class="i16 g"><use href="#search"/></svg></div><span class="gear"><svg class="i16 gr"><use href="#cog"/></svg></span></div>
                <div class="p-label">Date:</div>
                <div class="p-field p-last"><div class="inp inp-set"><svg class="i16 r"><use href="#closecirc"/></svg><span class="val">2024-10-08 00:00:00</span><svg class="i16 g"><use href="#search"/></svg></div><span class="gear"><svg class="i16 gr"><use href="#cog"/></svg></span></div>
            </div>
            <div class="p-foot">
                <span class="btn"><svg class="i16 g"><use href="#search"/></svg>Найти</span>
                <span class="btn"><svg class="i16 o"><use href="#cancel"/></svg>Отменить поиск</span>
            </div>
        </aside>

        <aside class="side side-r">
            <div class="side-top">
                <span class="s-btn"><svg class="i16 b"><use href="#cog"/></svg></span>
                <span class="s-btn"><svg class="i16 b"><use href="#dbsearch"/></svg></span>
                <span class="s-btn s-on"><svg class="i16 w"><use href="#findrep"/></svg></span>
            </div>
            <span class="s-foot"><svg class="i16 o"><use href="#minuscirc"/></svg></span>
        </aside>
    </main>

    <div class="dock">
        <div class="dock-tabs">
            <svg class="i16 b"><use href="#chart"/></svg>
            <svg class="i16 b"><use href="#monitor"/></svg>
            <svg class="i16 b"><use href="#flash"/></svg>
            <svg class="i16 b"><use href="#calendar"/></svg>
        </div>
        <svg class="i16 g"><use href="#pluscirc"/></svg>
    </div>

    <footer class="status">
        <svg class="i16 b st-flash"><use href="#flash"/></svg>
        <span class="st-text">13:56:43 | Выполнен запрос в БД: время - 38 мс, тип - Select, записано - 0 б, обновлено - 0 б, получено - 262 б, удалено - 0 б, затронуто строк - 10</span>
        <div class="st-select"><span>data-test</span><svg class="i10 gr"><use href="#chev"/></svg></div>
        <div class="st-path">
            <svg class="i16 b"><use href="#db"/></svg><span>data-test</span>
            <i class="sq"></i><span>tables</span>
            <svg class="i16 g"><use href="#table"/></svg><span>empty_table</span>
        </div>
        <svg class="i14 gr3 st-dots"><use href="#dots"/></svg>
    </footer>

    <div class="watermark">Механика вселенной</div>
</div>
</body>
</html>
```

FILE: styles.css
```css
* {
    box-sizing: border-box;
}
html, body {
    margin: 0;
    height: 100%;
    background: #fff;
}
body {
    font-family: "Open Sans", "Noto Sans", sans-serif;
    font-size: 12px;
    color: #333;
    overflow: hidden;
}
svg {
    fill: currentColor;
    flex: none;
    display: block;
}
.defs {
    display: none;
}
.i10 { width: 10px; height: 10px; }
.i12 { width: 12px; height: 16px; }
.i14 { width: 14px; height: 14px; }
.i16 { width: 16px; height: 16px; }
.i18 { width: 18px; height: 18px; }

.b { color: #0a7bf5; }
.g { color: #9acd00; }
.o { color: #ff8c00; }
.p { color: #6a3bc6; }
.r { color: #ff3b1f; }
.w { color: #fff; }
.gr { color: #7d8186; }
.gr2 { color: #a9adb1; }
.gr3 { color: #6c757d; }
.cg { color: #4caf50; }

.window {
    position: relative;
    display: flex;
    flex-direction: column;
    width: 1280px;
    height: 759px;
    padding-bottom: 1px;
    overflow: hidden;
}

/* шапка */
.top {
    display: flex;
    height: 57px;
    border-bottom: 1px solid #ff9500;
    flex: none;
}
.top-left {
    width: 350px;
    flex: none;
}
.quick {
    display: flex;
    align-items: center;
    height: 29px;
    padding-top: 1px;
}
.q-app {
    display: flex;
    justify-content: center;
    width: 33px;
    padding-right: 1px;
    border-right: 1px solid #eee;
    height: 18px;
    align-items: center;
    margin-right: 5px;
}
.q-btn {
    display: flex;
    align-items: center;
    justify-content: center;
    width: 30px;
    height: 28px;
}
.q-on {
    background: #0080ff;
    margin-right: 2px;
}
.q-wand {
    margin-left: 2px;
}
.q-hist {
    margin-left: 1px;
}
.q-cut {
    width: 18px;
    justify-content: flex-start;
    padding-left: 6px;
    overflow: hidden;
    border-right: 1px solid #eee;
    height: 26px;
}
.q-more {
    padding-left: 5px;
}
.menu {
    display: flex;
    align-items: center;
    height: 27px;
}
.m-file {
    display: flex;
    align-items: center;
    justify-content: center;
    width: 46px;
    height: 27px;
    margin-left: 1px;
    background: #9acd00;
    color: #fff;
    font-weight: 700;
}
.m-item {
    display: flex;
    align-items: center;
    gap: 4px;
    margin-left: 8px;
    color: #6e7378;
    white-space: nowrap;
}
.m-db {
    margin-left: 1px;
    gap: 5px;
}
.m-help {
    margin-left: 9px;
}

.ctx {
    display: flex;
    flex-direction: column;
    margin-bottom: -1px;
    border-left: 1px solid;
    border-right: 1px solid;
    flex: none;
}
.ctx-obj {
    width: 89px;
    border-color: #9acd00;
}
.ctx-edit {
    width: 123px;
    margin-left: 2px;
    border-color: #ff9500;
    border-bottom: 1px solid #fff;
}
.ctx-head {
    display: flex;
    align-items: center;
    justify-content: center;
    height: 28px;
    margin-top: 1px;
    color: #555;
}
.ctx-obj .ctx-head {
    background: #e4f9a0;
    color: #333;
    padding-right: 2px;
}
.ctx-edit .ctx-head {
    background: #ffd099;
}
.ctx-tab {
    display: flex;
    align-items: center;
    justify-content: center;
    flex: 1;
    gap: 4px;
    padding-right: 2px;
    color: #6e7378;
}
.ctx-edit .ctx-tab {
    padding-right: 5px;
    color: #333;
}
.ctx-obj .ctx-tab {
    border-bottom: 1px solid #ff9500;
}
.top-right {
    flex: 1;
    min-width: 0;
    padding-left: 3px;
}
.title-row {
    display: flex;
    align-items: center;
    height: 29px;
}
.title {
    width: 366px;
    margin-top: -1px;
    font-size: 12.5px;
    white-space: nowrap;
}
.top-search {
    display: flex;
    align-items: center;
    justify-content: space-between;
    width: 150px;
    height: 26px;
    padding: 0 4px 0 13px;
    border: 1px solid #eee;
    font-size: 12.5px;
    color: #9a9ea3;
}
.t-btn {
    display: flex;
    justify-content: center;
    flex: none;
}
.t-sync {
    width: 33px;
    padding-right: 2px;
    border-right: 1px solid #eee;
    height: 20px;
    align-items: center;
}
.t-help {
    color: #777;
    font-size: 17px;
    font-weight: 600;
    line-height: 20px;
}
.t-help.t-btn { width: 34px; }
.t-a { width: 32px; }
.t-b { width: 30px; }
.t-c { width: 36px; }
.t-d { width: 28px; }
.help-row {
    display: flex;
    align-items: center;
    justify-content: flex-end;
    gap: 10px;
    height: 27px;
    padding-right: 6px;
}

/* лента */
.ribbon {
    display: flex;
    height: 100px;
    flex: none;
    border-bottom: 1px solid #e9e9e9;
}
.group {
    display: flex;
    flex-direction: column;
    border-right: 1px solid #e9e9e9;
}
.g-ops { width: 715px; }
.g-sel { width: 433px; }
.g-paste { flex: 1; border-right: none; }
.items {
    display: grid;
    height: 83px;
}
.g-ops .items { grid-template-columns: 120px 69px 91px 72px 70px 86px 76px 72px 58px; }
.g-sel .items { grid-template-columns: 75px 70px 84px 72px 74px 52px; }
.g-paste .items { grid-template-columns: 70px 60px; }
.rb {
    display: flex;
    flex-direction: column;
    align-items: center;
    min-width: 0;
    color: #0a72ee;
}
.ri {
    width: 32px;
    height: 32px;
    margin-top: 3px;
}
.ri-low {
    transform: translateY(2px);
}
.lb {
    display: flex;
    flex-direction: column;
    justify-content: center;
    height: 41px;
    width: 100%;
    text-align: center;
    font-size: 12.5px;
    line-height: 13.5px;
    font-weight: 500;
}
.lb-low {
    padding-top: 4px;
    font-size: 13.3px;
    line-height: 14px;
}
.cv {
    width: 10px;
    height: 7px;
    margin-top: -1px;
    color: #333;
}
.off {
    color: #b4b7ba;
}
.g-title {
    height: 17px;
    line-height: 17px;
    text-align: center;
    color: #333;
}

/* рабочая область */
.work {
    display: flex;
    flex: 1;
    min-height: 0;
    border-bottom: 1px solid #e9e9e9;
}
.side {
    display: flex;
    flex-direction: column;
    justify-content: space-between;
    flex: none;
    width: 27px;
}
.side-l {
    border-right: 1px solid #e9e9e9;
}
.side-r {
    border-left: 1px solid #e9e9e9;
}
.side-top {
    display: flex;
    flex-direction: column;
    background: #f5f5f5;
}
.s-btn {
    display: flex;
    align-items: center;
    justify-content: center;
    height: 23px;
}
.side-l .s-btn { margin-top: 1px; }
.side-r .side-top { padding-top: 1px; }
.s-on {
    background: #9acd00;
}
.s-foot {
    display: flex;
    justify-content: center;
    padding-bottom: 4px;
}
.center {
    display: flex;
    flex-direction: column;
    width: 871px;
    flex: none;
}
.tabs {
    display: flex;
    align-items: stretch;
    height: 28px;
    flex: none;
    padding-top: 1px;
    border-bottom: 2px solid #9acd00;
}
.tab {
    display: flex;
    align-items: center;
    width: 110px;
    padding-left: 3px;
    background: #f9f9f9;
    font-size: 12.2px;
    color: #444;
    white-space: nowrap;
}
.tab svg:first-child {
    margin-right: 3px;
}
.tab svg:last-child {
    margin-left: 2px;
}
.tab-on {
    width: 95px;
    margin-left: 1px;
    background: #fff;
    border: 1px solid #9acd00;
    border-bottom: none;
    margin-bottom: -2px;
    padding-left: 2px;
    color: #333;
}
.tabs-rest {
    flex: 1;
    background: #e3f6c4;
}
.tab-btn {
    display: flex;
    align-items: center;
    justify-content: center;
    width: 17px;
}
.tab-dots {
    width: 18px;
    border-left: 1px solid #eee;
    margin: 2px 0;
}
.filters {
    display: flex;
    height: 27px;
    padding-left: 208px;
    flex: none;
}
.f-col {
    display: flex;
    gap: 1px;
    width: 221px;
    height: 27px;
    padding: 0 1px 1px 2px;
}
.inp {
    display: flex;
    align-items: center;
    justify-content: space-between;
    flex: 1;
    min-width: 0;
    padding: 0 4px 0 12px;
    border: 1px solid #eaeaea;
}
.ph {
    font-size: 13px;
    color: #9a9ea3;
}
.gear {
    display: flex;
    align-items: center;
    justify-content: center;
    width: 24px;
    flex: none;
    border: 1px solid #eaeaea;
}
.grid {
    flex: 1;
    min-height: 0;
    border-top: 1px solid #e9e9e9;
}
.row {
    display: grid;
    grid-template-columns: 36px 21px 25px 25px 25px 27px 25px 25px 221px 221px 220px;
    height: 29px;
    background: #fff;
    font-size: 12.2px;
}
.head {
    height: 28px;
    font-size: 12px;
    color: #80858a;
}
.alt {
    background: #f4f8e6;
}
.sel {
    background: #d9e6fd;
}
.c {
    display: flex;
    align-items: center;
    padding-left: 4px;
    border-right: 1px solid #ebebeb;
    border-bottom: 1px solid #ebebeb;
    white-space: nowrap;
    min-width: 0;
}
.sel .c {
    border-color: #c9d6ee;
}
.alt .c {
    border-color: #e6eadb;
}
.c:last-child {
    border-right-color: transparent;
}
.c-n {
    color: #333;
}
.ic {
    justify-content: center;
    padding-left: 0;
}
.c-id { padding-left: 5px; }
.c-name { padding-left: 6px; }
.c-date { padding-left: 6px; }
.head .c-id, .head .c-name, .head .c-date { padding-left: 4px; }
.v {
    color: #5a3ac0;
}
.c-cur {
    box-shadow: inset 0 0 0 1px #c3cfe6;
}
.dot {
    display: block;
    width: 14px;
    height: 14px;
    border-radius: 50%;
    background: #6c757d;
}
.calc {
    display: flex;
    align-items: center;
    justify-content: center;
    width: 25px;
    height: 27px;
    border: 1px solid #e6e6e6;
}
.alt .calc { border-color: #dfe3d2; }
.sel .calc { border-color: #c9d6ee; }
mark {
    background: #ffc800;
    color: #5a3ac0;
    font-size: 12.5px;
    line-height: 18px;
}
.key {
    margin-left: 6px;
}
.badge {
    display: flex;
    align-items: center;
    justify-content: center;
    width: 12px;
    height: 12px;
    margin-left: 5px;
    border-radius: 2px;
    background: #4caf50;
    color: #fff;
    font-size: 8px;
    font-weight: 700;
}
.grid-foot {
    height: 25px;
    flex: none;
    line-height: 28px;
    font-size: 12.3px;
    text-align: center;
    border-top: 1px solid #e9e9e9;
}

/* панель поиска */
.panel {
    display: flex;
    flex-direction: column;
    flex: 1;
    min-width: 0;
    border-left: 1px solid #e9e9e9;
}
.p-head {
    display: flex;
    align-items: center;
    gap: 3px;
    height: 27px;
    padding: 1px 2px 0 5px;
    flex: none;
    border-bottom: 1px solid #eaeaea;
}
.p-title {
    flex: 1;
    margin-left: 2px;
}
.p-min {
    position: relative;
    width: 13px;
    height: 13px;
    margin: 0 2px 0 4px;
    border-radius: 2px;
    background: #ff9500;
}
.p-min::after {
    content: "";
    position: absolute;
    left: 3px;
    top: 5px;
    width: 7px;
    height: 2px;
    background: #fff;
}
.p-body {
    flex: 1;
}
.p-label {
    height: 21px;
    line-height: 20px;
    padding-left: 2px;
}
.p-field {
    display: flex;
    gap: 2px;
    height: 26px;
    padding: 0 1px;
    margin-bottom: 2px;
}
.p-last {
    margin-bottom: 0;
    height: 29px;
    padding-bottom: 3px;
    border-bottom: 1px solid #eaeaea;
}
.inp-set {
    padding-left: 5px;
    justify-content: flex-start;
}
.inp-set .val {
    flex: 1;
    margin-left: 9px;
    padding-top: 1px;
    font-size: 13.5px;
    color: #333;
}
.p-foot {
    display: flex;
    justify-content: flex-end;
    gap: 3px;
    height: 27px;
    flex: none;
    padding: 2px 73px 2px 0;
    border-top: 1px solid #eaeaea;
}
.btn {
    display: flex;
    align-items: center;
    gap: 4px;
    padding: 0 6px;
    border: 1px solid #eaeaea;
    border-radius: 3px;
    color: #555;
    font-weight: 600;
}

/* низ окна */
.dock {
    display: flex;
    align-items: center;
    justify-content: space-between;
    height: 26px;
    flex: none;
    padding-right: 6px;
    border-bottom: 1px solid #e9e9e9;
}
.dock-tabs {
    display: flex;
    align-items: center;
    gap: 13px;
    height: 25px;
    padding: 0 7px 0 8px;
    background: #f5f5f5;
}
.status {
    display: flex;
    align-items: center;
    height: 21px;
    flex: none;
    white-space: nowrap;
    border-bottom: 1px solid #e9e9e9;
}
.st-flash {
    margin-right: 5px;
}
.st-text {
    width: 885px;
    flex: none;
    font-size: 12.43px;
    overflow: hidden;
}
.st-select {
    display: flex;
    align-items: center;
    justify-content: space-between;
    width: 135px;
    height: 100%;
    padding: 0 3px 0 8px;
    border-left: 1px solid #e9e9e9;
    border-right: 1px solid #e9e9e9;
}
.st-path {
    display: flex;
    align-items: center;
    gap: 2px;
    flex: 1;
    padding-left: 1px;
}
.sq {
    width: 15px;
    height: 13px;
    background: #ff8c00;
}
.st-dots {
    margin-right: 6px;
}
.watermark {
    position: absolute;
    right: 10px;
    top: 731px;
    font-size: 14.6px;
    color: rgba(90, 90, 90, 0.75);
    white-space: nowrap;
}
```
